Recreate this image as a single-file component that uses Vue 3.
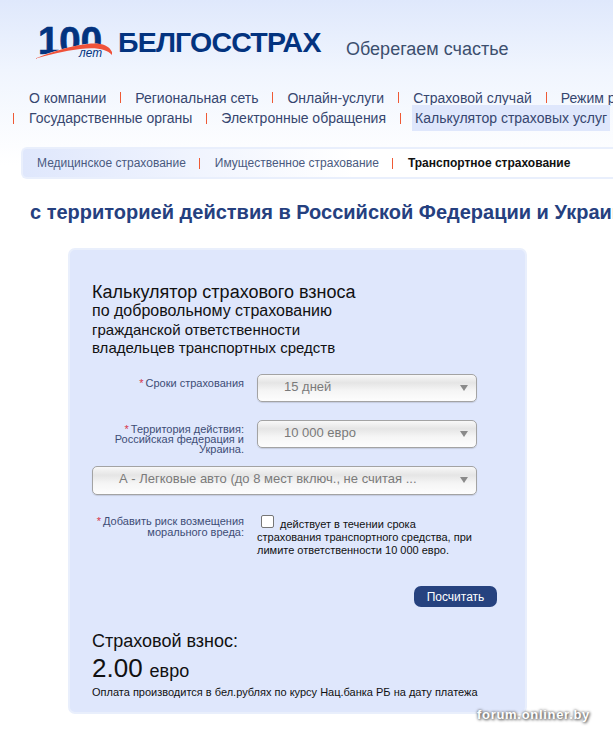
<script setup>
const mainNav = [
  ['О компании', 'Региональная сеть', 'Онлайн-услуги', 'Страховой случай', 'Режим работы'],
  ['Государственные органы', 'Электронные обращения']
]
const subNav = ['Медицинское страхование', 'Имущественное страхование']
</script>

<template>
  <div class="page">
    <header class="top">
      <svg class="logo" width="84" height="40" viewBox="0 0 84 40">
        <defs>
          <clipPath id="above-swoosh">
            <path d="M0 0H84V30L76 26C72 20 62 18 46 21C30 24 14 29 0 34Z" />
          </clipPath>
        </defs>
        <text x="4" y="30" class="hundred" textLength="64" lengthAdjust="spacingAndGlyphs" clip-path="url(#above-swoosh)">100</text>
        <path d="M0 35C14 29 30 24 46 21C62 18 74 19 78 28L78 31C73 25 62 23 46 25C30 27 14 31 0 35Z" fill="#f0523a" />
        <text x="45" y="33" class="years" textLength="23" lengthAdjust="spacingAndGlyphs">лет</text>
      </svg>
      <span class="brand">БЕЛГОССТРАХ</span>
      <span class="slogan">Оберегаем счастье</span>
    </header>

    <nav class="nav">
      <div class="nav-row first">
        <template v-for="(item, i) in mainNav[0]" :key="item">
          <i v-if="i" class="sep"></i>
          <a>{{ item }}</a>
        </template>
      </div>
      <div class="nav-row second">
        <template v-for="item in mainNav[1]" :key="item">
          <i class="sep"></i>
          <a>{{ item }}</a>
        </template>
        <i class="sep"></i>
        <a class="active">Калькулятор страховых услуг</a>
      </div>
    </nav>

    <div class="subnav">
      <template v-for="item in subNav" :key="item">
        <a>{{ item }}</a>
        <i class="sep"></i>
      </template>
      <b>Транспортное страхование</b>
    </div>

    <h1 class="heading">с территорией действия в Российской Федерации и Украине</h1>

    <section class="card">
      <h2 class="title">
        <span class="t1">Калькулятор страхового взноса</span>
        <span class="t2">по добровольному страхованию</span>
        <span class="t3">гражданской ответственности</span>
        <span class="t3 last">владельцев транспортных средств</span>
      </h2>

      <div class="row period">
        <label class="label"><em>*</em>Сроки страхования</label>
        <div class="select">15 дней</div>
      </div>
      <div class="row terr">
        <label class="label"><em>*</em>Территория действия: Российская федерация и Украина.</label>
        <div class="select">10 000 евро</div>
      </div>
      <div class="select wide">А - Легковые авто (до 8 мест включ., не считая ...</div>

      <div class="row moral">
        <label class="label"><em>*</em>Добавить риск возмещения морального вреда:</label>
        <div class="check-text"><span class="box"></span>действует в течении срока страхования транспортного средства, при лимите ответственности 10 000 евро.</div>
      </div>

      <div class="actions"><button class="btn" type="button">Посчитать</button></div>

      <div class="result">
        <div class="r1">Страховой взнос:</div>
        <div class="r2"><span>2.00</span> евро</div>
        <div class="r3">Оплата производится в бел.рублях по курсу Нац.банка РБ на дату платежа</div>
      </div>
    </section>

    <div class="watermark">forum.onliner.by</div>
  </div>
</template>

<style scoped>
.page {
  position: relative;
  width: 613px;
  height: 738px;
  overflow: hidden;
  font-family: "Liberation Sans", Arial, sans-serif;
  background: linear-gradient(180deg, #dfe8fc 0, #f0f5fe 70px, #ffffff 165px);
}
.top {
  height: 85px;
  display: flex;
  align-items: flex-start;
  box-sizing: border-box;
  padding: 24px 0 0 34px;
}
.logo { flex: none; display: block; }
.hundred {
  font: 700 38px "Liberation Sans", sans-serif;
  fill: #03337f;
  stroke: #03337f;
  stroke-width: .7px;
}
.years { font: italic 400 12px "Liberation Sans", sans-serif; fill: #03337f; }
.brand {
  font-size: 28.5px;
  line-height: 36px;
  font-weight: 700;
  color: #03337f;
  width: 204px;
  white-space: nowrap;
  letter-spacing: -0.8px;
}
.slogan {
  margin: 12px 0 0 24px;
  font-size: 18px;
  line-height: 26px;
  color: #3c4f6e;
  white-space: nowrap;
}
.nav-row {
  display: flex;
  align-items: center;
  white-space: nowrap;
  font-size: 14px;
  color: #36466f;
}
.nav-row.first { height: 25px; padding-left: 29px; }
.nav-row.second { height: 26px; padding-left: 13px; margin-top: -5px; }
.sep {
  flex: none;
  display: block;
  width: 1px;
  height: 11px;
  background: #ef5a35;
  margin: 0 14px;
}
.nav-row.second .sep:first-child { margin: 0 15px 0 0; }
.nav-row .active {
  background: #dfe7fc;
  height: 26px;
  line-height: 26px;
  padding: 0 3px;
  margin-left: -3px;
  flex: none;
}
.subnav {
  display: flex;
  align-items: center;
  margin: 16px 0 0 21px;
  width: 640px;
  height: 32px;
  box-sizing: border-box;
  padding-left: 14px;
  border: 2px solid #e9effc;
  border-right: 0;
  border-radius: 6px 0 0 6px;
  background: linear-gradient(90deg, #dfe7fc 0, #f0f4fe 170px, #ffffff 330px);
  font-size: 12px;
  color: #4a5a80;
  white-space: nowrap;
}
.subnav .sep { margin: 0 15px 0 13px; }
.subnav b { color: #111; }
.heading {
  margin: 21px 0 0 30px;
  font-size: 20px;
  line-height: 24px;
  font-weight: 700;
  color: #25407f;
  white-space: nowrap;
}
.card {
  margin: 24px 0 0 68px;
  width: 459px;
  height: 466px;
  box-sizing: border-box;
  padding: 32px 22px 0;
  border: 2px solid #e9effc;
  border-radius: 7px;
  background: #dfe7fc;
}
.title { margin: 0; font-weight: 400; color: #111; }
.title span { display: block; white-space: nowrap; }
.t1 { font-size: 18px; line-height: 20px; }
.t2 { font-size: 16px; line-height: 18px; }
.t3 { font-size: 15px; line-height: 19px; }
.t3.last { line-height: 17px; }
.row { display: flex; align-items: flex-start; }
.label {
  flex: none;
  width: 152px;
  text-align: right;
  font-size: 11px;
  line-height: 10px;
  color: #3d4d76;
}
.label em { color: #d8344a; font-style: normal; margin-right: 2px; }
.row .select { margin-left: 13px; }
.select {
  position: relative;
  box-sizing: border-box;
  width: 220px;
  height: 28px;
  line-height: 23px;
  padding-left: 26px;
  border: 1px solid #a3a3a3;
  border-radius: 5px;
  background: linear-gradient(180deg, #f8f8f8 0, #e5e5e5 30%, #f5f5f5 60%, #fdfdfd 100%);
  font-size: 13px;
  color: #7a7a7a;
  white-space: nowrap;
  box-shadow: 0 1px 1px rgba(0, 0, 0, .12);
}
.select::after {
  content: "";
  position: absolute;
  right: 8px;
  top: 10px;
  border-style: solid;
  border-width: 6px 4px 0;
  border-color: #8a8a8a transparent transparent;
}
.period { margin-top: 18px; }
.period .label { padding-top: 4px; line-height: 11px; }
.terr { margin-top: 18px; height: 28px; }
.terr .label { padding-top: 4px; }
.wide { width: 385px; height: 29px; margin-top: 18px; }
.moral { margin-top: 18px; }
.moral .label { padding-top: 3px; line-height: 11px; }
.check-text {
  width: 222px;
  margin-left: 13px;
  padding-top: 2px;
  font-size: 11px;
  line-height: 13px;
  color: #111;
}
.box {
  display: inline-block;
  box-sizing: border-box;
  width: 13px;
  height: 13px;
  margin: 0 6px 0 4px;
  background: #fff;
  border: 1px solid #767676;
  border-radius: 2px;
}
.actions { display: flex; justify-content: flex-end; margin-top: 29px; width: 405px; }
.btn {
  width: 83px;
  height: 21px;
  border: 0;
  border-radius: 7px;
  background: #26427f;
  color: #fff;
  font: 400 12px "Liberation Sans", sans-serif;
  padding: 0;
}
.result { margin-top: 22px; color: #111; white-space: nowrap; }
.r1 { font-size: 18px; line-height: 24px; }
.r2 { font-size: 18px; line-height: 31px; }
.r2 span { font-size: 26px; margin-right: 2px; }
.r3 { font-size: 11px; line-height: 13px; margin-top: -1px; }
.watermark {
  position: absolute;
  left: 477px;
  top: 707px;
  font: 700 13px "Liberation Sans", sans-serif;
  letter-spacing: .7px;
  color: #fff;
  text-shadow: 0 0 3px #555, 1px 1px 3px #555;
  white-space: nowrap;
}
</style>
